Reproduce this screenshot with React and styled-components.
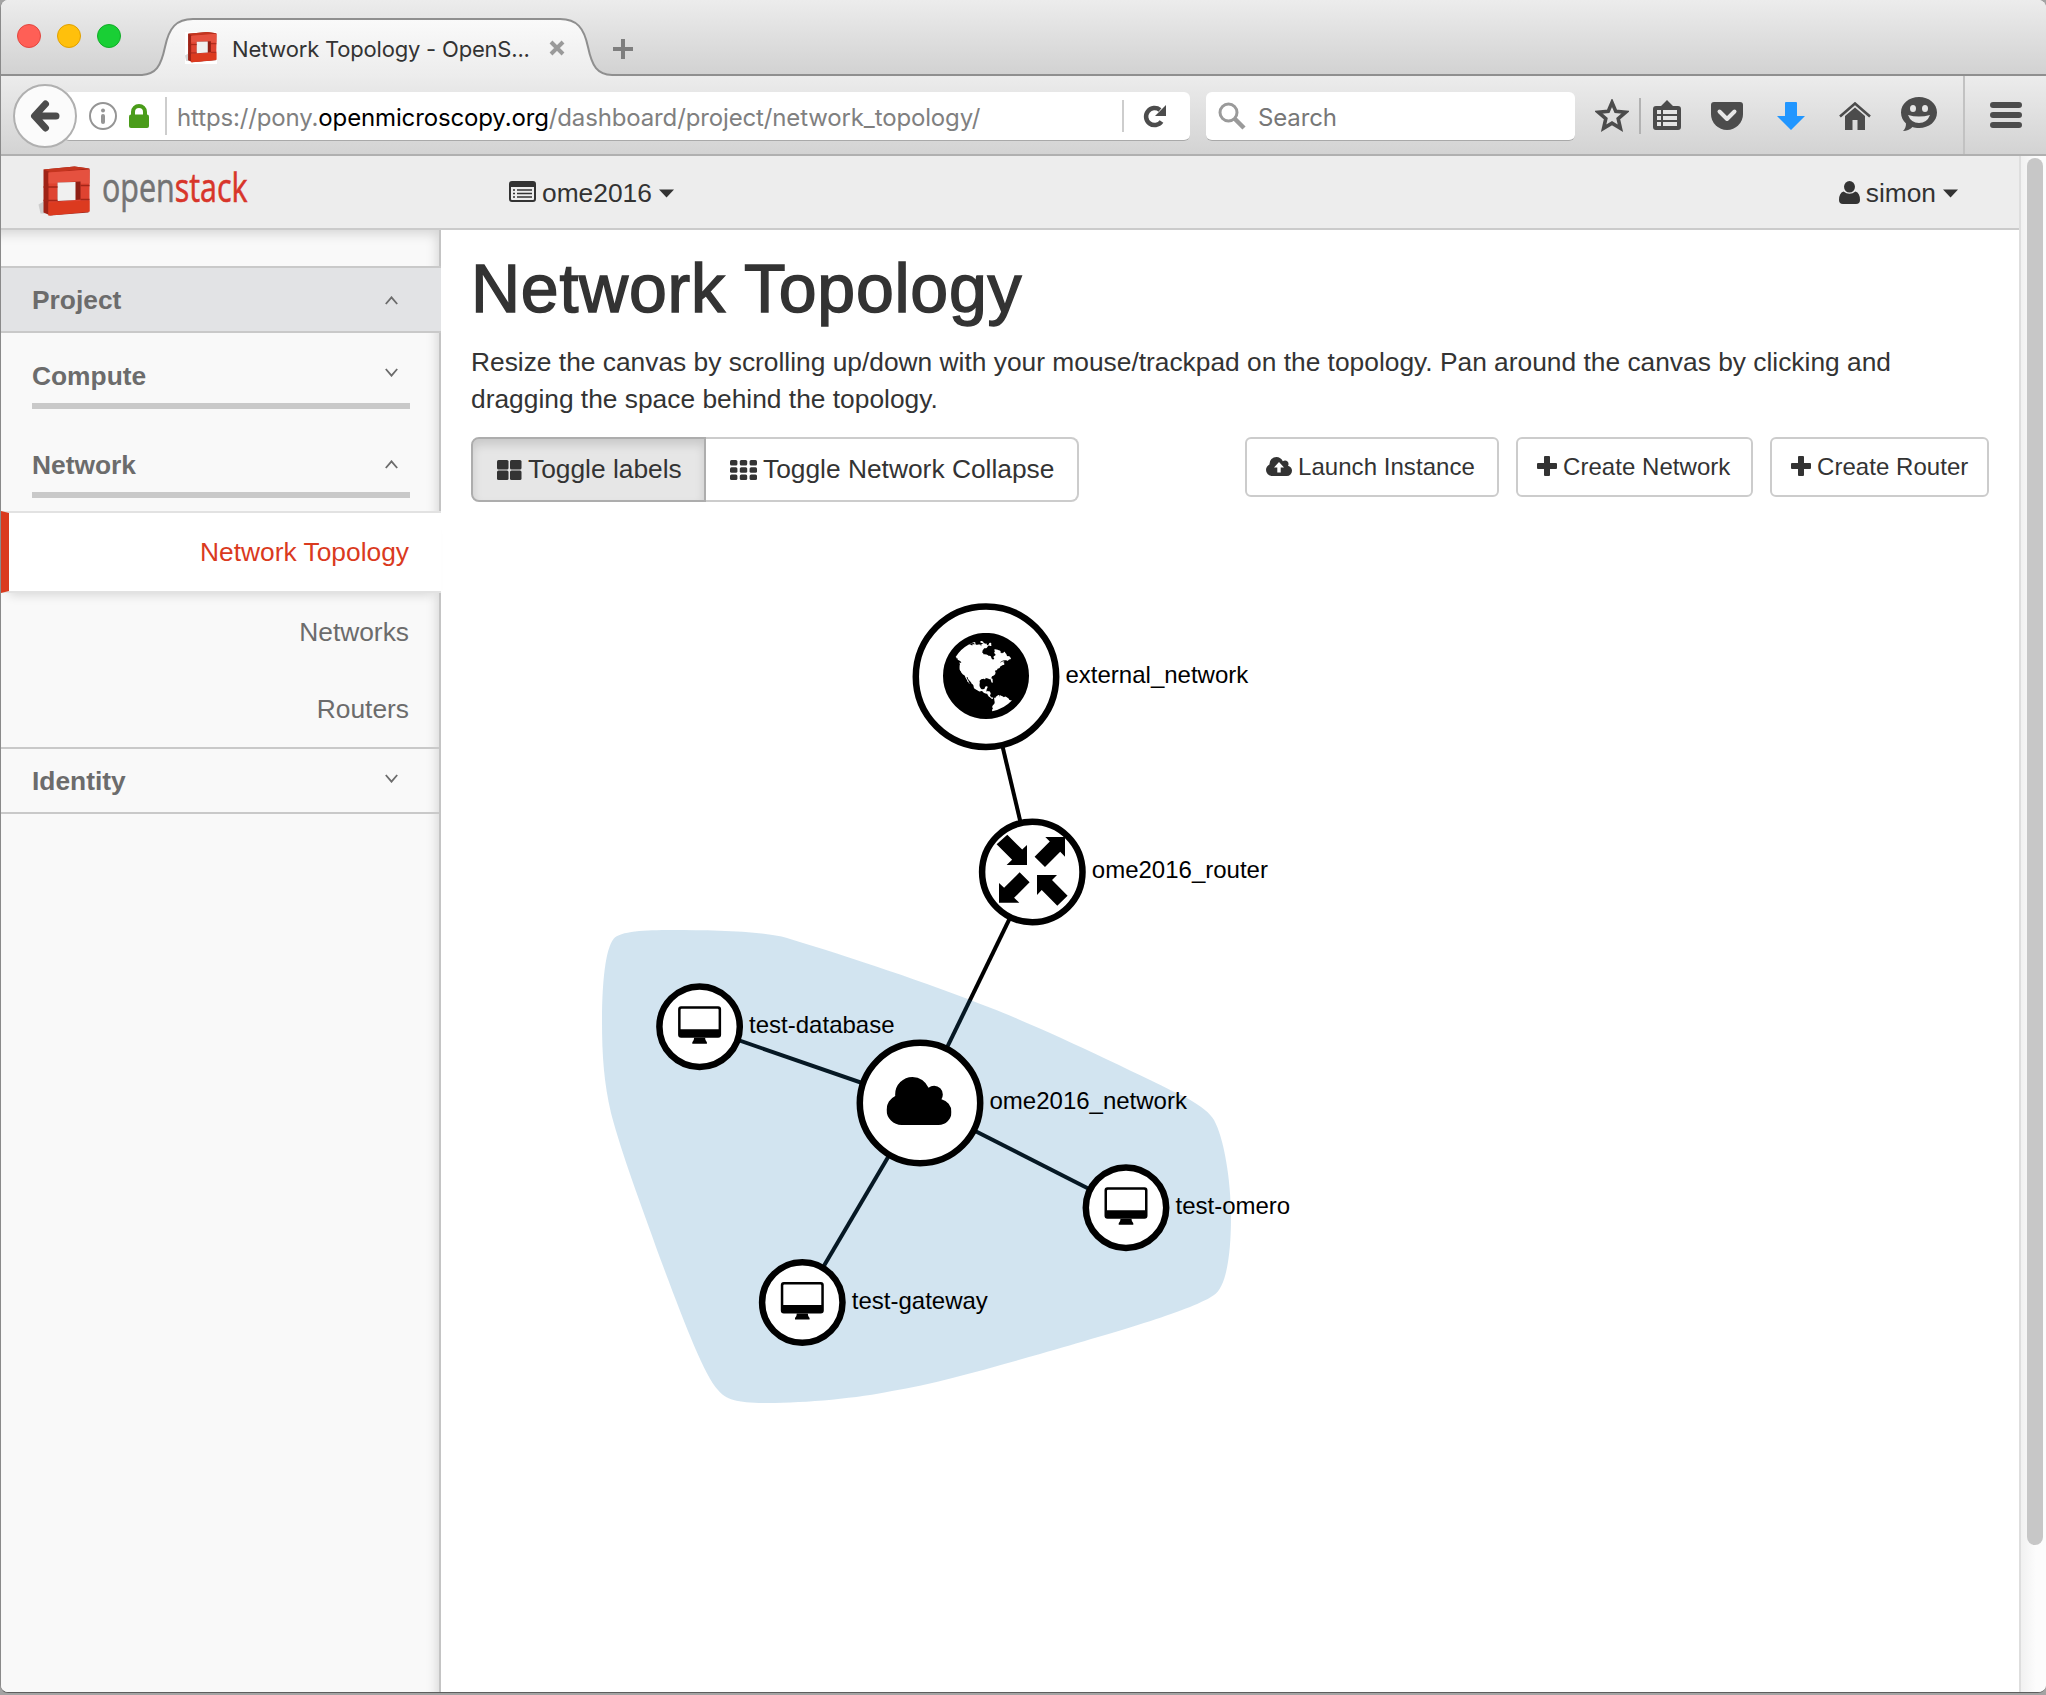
import React from "react";
import styled, { createGlobalStyle } from "styled-components";

const GlobalStyle = createGlobalStyle`
  * { box-sizing: border-box; }
  html, body { margin: 0; padding: 0; background: #a3a3a3; }
  body { width: 2046px; height: 1695px; overflow: hidden; }
  svg { display: block; flex: none; }
`;

const ui = `"Inter", "Roboto", sans-serif`;
const page = `"Liberation Sans", Arial, sans-serif`;

const Window = styled.div`
  width: 2046px;
  height: 1693px;
  display: flex;
  flex-direction: column;
  overflow: hidden;
  background: #fff;
  border-left: 1px solid #8a8a8a;
  border-bottom: 1px solid #5e5e5e;
  border-radius: 8px;
`;

/* ---------- browser chrome ---------- */

const TitleBar = styled.div`
  flex: none;
  height: 76px;
  display: flex;
  background: linear-gradient(#ececec, #d2d2d2);
  border-bottom: 2px solid #8f8f8f;
`;

const Lights = styled.div`
  display: flex;
  gap: 16px;
  padding: 24px 0 0 16px;
  width: 141px;
`;

const Light = styled.span`
  width: 24px;
  height: 24px;
  border-radius: 50%;
  background: ${(p) => p.$fill};
  border: 1px solid ${(p) => p.$edge};
`;

const Tab = styled.div`
  position: relative;
  width: 470px;
  height: 76px;
  display: flex;
  align-items: center;
  padding: 20px 0 0 43px;
  font: 400 22px/32px ${ui};
  color: #333;
`;

const TabShape = styled.svg`
  position: absolute;
  left: 0;
  top: 0;
`;

const TabText = styled.span`
  position: relative;
  margin-left: 15px;
  padding-top: 2px;
  width: 304px;
  letter-spacing: -0.2px;
  white-space: nowrap;
`;

const TabIcon = styled.svg`
  position: relative;
  margin-left: ${(p) => p.$left || 0}px;
`;

const NewTab = styled.div`
  padding: 39px 0 0 1px;
`;

const Toolbar = styled.div`
  flex: none;
  height: 80px;
  display: flex;
  padding-left: 12px;
  background: linear-gradient(#ececec, #d3d3d3);
  border-bottom: 2px solid #b0b0b0;
`;

const BackButton = styled.div`
  position: relative;
  flex: none;
  width: 64px;
  height: 64px;
  margin-top: 8px;
  border-radius: 50%;
  border: 2px solid #b0b0b0;
  background: #fbfbfb;
  display: flex;
  align-items: center;
  justify-content: center;
`;

const Field = styled.div`
  flex: none;
  height: 49px;
  margin-top: 16px;
  display: flex;
  align-items: center;
  background: #fff;
  border-bottom: 1px solid #a9a9a9;
  border-radius: 6px;
  font: 400 24px/46px ${ui};
  color: #808080;
  white-space: nowrap;
`;

const UrlField = styled(Field)`
  width: 1127px;
  margin-left: -14px;
  padding-left: 26px;
`;

const SearchField = styled(Field)`
  width: 369px;
  margin-left: 16px;
  padding-left: 12px;
  color: #777;
`;

const FieldText = styled.span`
  width: ${(p) => p.$w}px;
  padding: 3px 0 0 ${(p) => p.$left}px;
  letter-spacing: -0.14px;
  b {
    font-weight: 400;
    color: #000;
  }
`;

const Lock = styled.svg`
  margin: 0 16px 0 12px;
`;

const Reload = styled.svg`
  margin-left: 19px;
`;

const Rule = styled.div`
  flex: none;
  width: 2px;
  height: ${(p) => p.$h}px;
  background: ${(p) => p.$c || "#cdcdcd"};
`;

const Tools = styled.div`
  flex: 1;
  display: flex;
  padding-left: 20px;
`;

const Tool = styled.div`
  flex: none;
  width: ${(p) => p.$w}px;
  padding-top: ${(p) => p.$t}px;
  padding-left: ${(p) => p.$left || 0}px;
`;

/* ---------- page ---------- */

const Viewport = styled.div`
  flex: 1;
  display: flex;
  min-height: 0;
  font: 400 26.35px/37px ${page};
  color: #333;
`;

const Site = styled.div`
  width: 2018px;
  display: flex;
  flex-direction: column;
`;

const ScrollTrack = styled.div`
  flex: 1;
  border-left: 2px solid #dedede;
  padding: 2px 0 0 6px;
  background: linear-gradient(90deg, #f1f1f1, #fcfcfc 60%);
`;

const ScrollThumb = styled.div`
  width: 16px;
  height: 1387px;
  border-radius: 8px;
  background: #c7c7c7;
`;

const Header = styled.header`
  flex: none;
  height: 74px;
  display: flex;
  padding: 0 61px 0 37px;
  background: #ededed;
  border-bottom: 2px solid #cbcbcb;
`;

const Menu = styled.div`
  display: flex;
  padding-top: 18px;
  margin-left: ${(p) => p.$left};
`;

const MenuIcon = styled.svg`
  margin-top: ${(p) => p.$t}px;
`;

const MenuLabel = styled.span`
  padding: 1px 7px 0 6px;
`;

const Columns = styled.div`
  flex: 1;
  min-height: 0;
  display: flex;
`;

const Sidebar = styled.nav`
  flex: none;
  width: 440px;
  padding-top: 36px;
  background: #f9f9f9;
  border-right: 2px solid #c4c4c4;
  box-shadow: inset -6px 8px 12px -4px rgba(0, 0, 0, 0.14);
  color: #6c6c6c;
`;

const Panel = styled.div`
  height: 67px;
  margin-right: ${(p) => (p.$active ? "-2px" : 0)};
  padding: 14px ${(p) => (p.$active ? 43 : 41)}px 0 31px;
  display: flex;
  justify-content: space-between;
  font-weight: 700;
  border-top: 2px solid #c9c9c9;
  border-bottom: 2px solid #c9c9c9;
  background: ${(p) => (p.$active ? "#e2e3e5" : "transparent")};
`;

const Group = styled.div`
  margin: ${(p) => p.$top}px 29px 0 31px;
  height: 51px;
  padding-right: 12px;
  display: flex;
  justify-content: space-between;
  font-weight: 700;
  border-bottom: 6px solid #c9c9c9;
`;

const Chevron = styled.svg`
  margin-top: ${(p) => p.$t}px;
`;

const Item = styled.div`
  height: 77px;
  padding: 21px 30px 0 0;
  text-align: right;
`;

const ActiveItem = styled.div`
  height: 82px;
  margin: 13px -2px 0 0;
  padding: 21px 32px 0 0;
  text-align: right;
  color: #da3a1e;
  background: #fff;
  border-top: 2px solid #e2e2e2;
  border-bottom: 2px solid #e2e2e2;
  border-left: 8px solid #da3a1e;
  box-shadow: 0 10px 10px -8px rgba(0, 0, 0, 0.14);
`;

const Main = styled.main`
  flex: 1;
  padding: 22px 30px 0 30px;
`;

const Title = styled.h1`
  margin: 0;
  font: 400 68px/73px ${page};
  -webkit-text-stroke: 1.5px #333;
  letter-spacing: 0.75px;
`;

const Lead = styled.p`
  margin: 19px 0;
  width: 1460px;
`;

const Bar = styled.div`
  display: flex;
  height: 65px;
  align-items: flex-start;
`;

const Toggle = styled.div`
  height: 65px;
  width: ${(p) => p.$w}px;
  display: flex;
  align-items: center;
  gap: 6px;
  padding: 0 0 0 24px;
  border: 2px solid #ccc;
  border-left-width: ${(p) => (p.$on ? 2 : 0)}px;
  border-radius: ${(p) => (p.$on ? "8px 0 0 8px" : "0 8px 8px 0")};
  white-space: nowrap;
  ${(p) =>
    p.$on &&
    `background: #e6e6e6; border-color: #adadad; box-shadow: inset 0 6px 10px rgba(0,0,0,0.125);`}
`;

const Actions = styled.div`
  margin-left: auto;
  display: flex;
  gap: 17px;
`;

const Action = styled.div`
  height: 60px;
  width: ${(p) => p.$w}px;
  display: flex;
  align-items: center;
  gap: 6px;
  padding: 0 0 2px 19px;
  border: 2px solid #ccc;
  border-radius: 6px;
  font-size: 24px;
  letter-spacing: 0.05px;
  white-space: nowrap;
`;

const Canvas = styled.svg`
  font: 24px ${page};
`;

/* ---------- icons ---------- */

const Cube = () => (
  <>
    <path d="M0 38 L7 34 V47 H2Z" fill="#b9b9b9" opacity=".6" />
    <path d="M5 3 L36 0 L51 2 L50 46 L12 49 L5 46Z" fill="#9f2317" />
    <path d="M5 3 L36 0 L51 2 L13 6Z" fill="#c4351f" />
    <path d="M10 6 L51 3 V45 L10 49Z" fill="#df4331" />
    <path d="M10 6 L51 3 V17 H10Z" fill="#e5513f" />
    <path d="M10 36 L51 34 V45 L10 49Z" fill="#dc3a1f" />
    <path d="M19 16 L42 15 V33 L19 35Z" fill="#8e1e14" />
    <path d="M19 16 L37 15.500 V33.500 L19 34.500Z" fill="#f0f0f0" />
    <path d="M5 20.500 H19 M42 19 H51 M5 34 H19 M42 33 H51" stroke="#a32618" strokeWidth="1.500" />
  </>
);

const Logo = () => (
  <svg width="252" height="72" viewBox="38 156 252 72" fontFamily="Open Sans, sans-serif" fontSize="40">
    <g transform="translate(38.500 166.500)"><Cube /></g>
    <text x="102" y="202" textLength="145.500" lengthAdjust="spacingAndGlyphs" strokeWidth=".6">
      <tspan fill="#737373" stroke="#737373">open</tspan>
      <tspan fill="#d8352a" stroke="#d8352a">stack</tspan>
    </text>
  </svg>
);

const Caret = () => (
  <MenuIcon $t={15} width="15" height="9" viewBox="0 0 15 9"><path d="M0 .5H15L7.500 8.500Z" fill="#333" /></MenuIcon>
);

const Arrow = ({ up, t }) => (
  <Chevron $t={t} width="13" height="9" viewBox="0 0 13 9">
    <path d={up ? "M.8 8 L6.500 1.300 L12.200 8" : "M.8 1 L6.500 7.700 L12.200 1"} fill="none" stroke="#6c6c6c" strokeWidth="1.800" />
  </Chevron>
);

const Plus = () => (
  <svg width="20" height="20" viewBox="0 0 20 20"><path d="M8 0h4q1 0 1 1v6h6q1 0 1 1v4q0 1-1 1h-6v6q0 1-1 1H8q-1 0-1-1v-6H1q-1 0-1-1V8q0-1 1-1h6V1q0-1 1-1z" fill="#333" /></svg>
);

const cloudPath = "M1984 1152q0 159-112.500 271.500t-271.500 112.500h-1088q-185 0-316.500-131.500t-131.500-316.500q0-132 71-241.500t187-163.500q-2-28-2-43 0-212 150-362t362-150q158 0 286.500 88t187.500 230q70-62 166-62 106 0 181 75t75 181q0 75-41 138 129 30 213 134.500t84 239.500z";

const globePath =
  "M896 128q209 0 385.500 103t279.500 279.500 103 385.500-103 385.500-279.500 279.500-385.500 103-385.500-103-279.500-279.500-103-385.500 103-385.500 279.500-279.500 385.500-103zm274 521q-2 1-9.500 9.500t-13.500 9.500q2 0 4.500-5t5-11 3.500-7q6-7 22-15 14-6 52-12 34-8 51 11-2-2 9.500-13t14.500-12q3-2 15-4.500t15-7.500l2-22q-12 1-17.500-7t-6.500-21q0 2-6 8 0-7-4.500-8t-11.500 1-9 1q-10-3-15-7.500t-8-16.500-4-15q-2-5-9.500-11t-9.500-10q-1-2-2.500-5.500t-3-6.500-4-5.500-5.500-2.500-7 5-7.500 10-4.500 5q-3-2-6-1.500t-4.500 1-4.500 3-5 3.500q-3 2-8.500 3t-8.500 2q15-5-1-11-10-4-16-3 9-4 7.500-12t-8.500-14h5q-1-4-8.500-8.500t-17.500-8.500-13-6q-8-5-34-9.500t-33-.5q-5 6-4.500 10.500t4 14 3.500 12.500q1 6-5.500 13t-6.500 12q0 7 14 15.500t10 21.500q-3 8-16 16t-16 12q-5 8-1.500 18.500t10.500 16.500q2 2 1.500 4t-3.500 4.500-5.500 4-6.500 3.500l-3 2q-11 5-20.500-6t-13.500-26q-7-25-16-30-23-8-29 1-5-13-41-26-25-9-58-4 6-1 0-15-7-15-19-12 3-6 4-17.500t1-13.500q3-13 12-23 1-1 7-8.500t9.500-13.500 .5-6q35 4 50-11 5-5 11.500-17t10.500-17q9-6 14-5.500t14.500 5.500 14.500 5.500q14 1 15.500-11t-7.500-20q12 1 3-17-4-7-8-9-12-4-27 5-8 4 2 8-1-1-9.500 10.500t-16.500 17.500-16-5q-1-1-5.500-13.500t-9.500-13.500q-8 0-16 15 3-8-11-15t-24-8q19-12-8-27-7-4-20.500-5t-19.500 4q-5 7-5.500 11.500t5 8 10.500 5.500 11.500 4 8.500 3q14 10 8 14-2 1-8.500 3.500t-11.500 4.500-6 4q-3 4 0 14t-2 14q-5-5-9-17.500t-7-16.500q7 9-25 6l-10-1q-4 0-16 2t-20.500 1-13.500-8q-4-8 0-20 1-4 4-2-4-3-11-9.500t-10-8.500q-46 15-94 41 6 1 12-1 5-2 13-6.500t10-5.500q34-14 42-7l5-5q14 16 20 25-7-4-30-1-20 6-22 12 7 12 5 18-4-3-11.500-10t-14.500-11-15-5q-16 0-22 1-146 80-235 222 7 7 12 8 4 1 5 9t2.500 11 11.500-3q9 8 3 19 1-1 44 27 19 17 21 21 3 11-10 18-1-2-9-9t-9-4q-3 5 .5 18.500t10.500 12.500q-7 0-9.500 16t-2.500 35.500-1 23.500l2 1q-3 12 5.500 34.500t21.500 19.500q-13 3 20 43 6 8 8 9 3 2 12 7.500t15 10 10 10.500q4 5 10 22.500t14 23.500q-2 6 9.500 20t10.500 23q-1 0-2.500 1t-2.500 1q3 7 15.500 14t15.500 13q1 3 2 10t3 11 8 2q2-20-24-62-15-25-17-29-3-5-5.500-15.500t-4.500-14.500q2 0 6 1.500t8.500 3.500 7.500 4 2 3q-3 7 2 17.500t12 18.500 17 19 12 13q6 6 14 19.500t0 13.500q9 0 20 10t17 20q5 8 8 26t5 24q2 7 8.500 13.500t12.500 9.500l16 8 13 7q5 2 18.500 10.500t21.500 11.500q10 4 16 4t14.500-2.500 13.500-3.500q15-2 29 15t21 21q36 19 55 11-2 1 .5 7.500t8 15.500 9 14.500 5.500 8.500q5 6 18 15t18 15q6-4 7-9-3 8 7 20t18 10q14-3 14-32-31 15-49-18 0-1-2.500-5.500t-4-8.500-2.500-8.500 0-7.500 5-3q9 0 10-3.500t-2-12.500-4-13q-1-8-11-20t-12-15q-5 9-16 8t-16-9q0 1-1.500 5.500t-1.500 6.500q-13 0-15-1 1-3 2.500-17.500t3.500-22.500q1-4 5.500-12t7.500-14.500 4-12.500-4.500-9.500-17.500-2.500q-19 1-26 20-1 3-3 10.500t-5 11.500-9 7q-7 3-24 2t-24-5q-13-8-22.500-29t-9.500-37q0-10 2.500-26.500t3-25-5.500-24.500q3-2 9-9.500t10-10.500q2-1 4.500-1.500t4.500 0 4-1.500 3-6q-1-1-4-3-3-3-4-3 7 3 28.500-1.500t27.500 1.500q15 11 22-2 0-1-2.500-9.500t-.5-13.500q5 27 29 9 3 3 15.500 5t17.500 5q3 2 7 5.500t5.500 4.500 5-.5 8.500-6.500q10 14 12 24 11 40 19 44 7 3 11 2t4.500-9.500 0-14-1.500-12.500l-1-8v-18l-1-8q-15-3-18.500-12t1.500-18.500 15-18.500q1-1 8-3.500t15.500-6.500 12.500-8q21-19 15-35 7 0 11-9-1 0-5-3t-7.500-5-4.500-2q9-5 2-16 5-3 7.500-11t7.500-10q9 12 21 2 7-8 1-16 5-7 20.500-10.500t18.500-9.500q7 2 8-2t1-12 3-12q4-5 15-9t13-5l17-11q3-4 0-4 18 2 31-11 10-11-6-20 3-6-3-9.500t-15-5.500q3-1 11.500-.5t10.500-1.500q15-10-7-16-17-5-43 12zm-163 877q206-36 351-189-3-3-12.500-4.500t-12.500-3.500q-18-7-24-8 1-7-2.500-13t-8-9-12.500-8-11-7q-2-2-7-6t-7-5.500-7.500-4.500-8.500-2-10 1l-3 1q-3 1-5.500 2.500t-5.500 3-4 3 0 2.500q-21-17-36-22-5-1-11-5.500t-10.500-7-10-1.500-11.500 7q-5 5-6 15t-2 13q-7-5 0-17.500t2-18.500q-3-6-10.500-4.500t-12 4.500-11.500 8.500-9 6.500-8.500 5.500-8.500 7.500q-3 4-6 12t-5 11q-2-4-11.500-6.500t-9.500-5.500q2 10 4 35t5 38q7 31-12 48-27 25-29 40-4 22 12 26 0 7-8 20.500t-7 21.500q0 6 2 16z";

const Monitor = () => (
  <>
    <path fillRule="evenodd" d="M-18.500-20.500H18.500Q21.500-20.500 21.500-17.500V8Q21.500 11 18.500 11H-18.500Q-21.500 11-21.500 8V-17.500Q-21.500-20.500-18.500-20.500ZM-18-18Q-19-18-19-17V2.500H19V-17Q19-18 18-18Z" />
    <path d="M-5.500 11H5.500Q5.500 14 7.300 15.500V17H-7.300V15.500Q-5.500 14-5.500 11Z" />
  </>
);

const RouterArrows = () => (
  <path d="M-25-37.300L-10.100-22.400L-5.300-27V-7H-25.700L-20.200-12.200L-35.700-27.700ZM32.700-35V-15.300L27.900-20.200L12.700-5L2.300-15.300L17.500-30.500L13-35ZM-33.300 30.700V11L-28.200 15.800L-12.700.3L-2.700 10.300L-18.200 25.800L-13 30.700ZM4.700 3H24.700L19.700 8.100L35.300 23.700L25 33.700L9.400 18.100L4.700 23Z" />
);

const NetworkCloud = () => (
  <svg x={-33.5} y={-26} width={65} height={48} viewBox="64 128 1920 1408" preserveAspectRatio="none"><path d={cloudPath} /></svg>
);

const Globe = () => (
  <svg x={-43} y={-43.8} width={86} height={86} viewBox="128 128 1536 1536"><path d={globePath} /></svg>
);

const nodes = [
  { name: "external_network", x: 986, y: 676.7, r: 70, Glyph: Globe },
  { name: "ome2016_router", x: 1032.3, y: 872, r: 50, Glyph: RouterArrows },
  { name: "ome2016_network", x: 920, y: 1103, r: 60, Glyph: NetworkCloud },
  { name: "test-database", x: 699.6, y: 1026.7, r: 40, Glyph: Monitor },
  { name: "test-omero", x: 1126, y: 1207.7, r: 40, Glyph: Monitor },
  { name: "test-gateway", x: 802.3, y: 1302.5, r: 40, Glyph: Monitor },
];
const links = [[0, 1], [1, 2], [2, 3], [2, 4], [2, 5]];

const Topology = () => (
  <Canvas width="1518" height="1000" viewBox="471 502 1518 1000">
    {links.map(([a, b]) => (
      <line key={`${a}${b}`} x1={nodes[a].x} y1={nodes[a].y} x2={nodes[b].x} y2={nodes[b].y} stroke="#000" strokeWidth="4" />
    ))}
    <path
      fill="#1f77b4"
      fillOpacity=".2"
      d="M613.500 939C620 931 645 930 672 930C712 930 762 931 787 938C850 957 925 982 991 1008C1050 1031 1140 1075 1187 1098C1202 1107 1210 1113 1214 1120C1224 1138 1231 1180 1231 1217C1231 1260 1225 1288 1214 1295C1195 1309 1120 1331 1040 1354C990 1368 935 1384 892 1391C860 1398 805 1403 768 1403C738 1403 726 1400 718 1390C704 1375 684 1322 660 1258C642 1207 622 1155 611 1113C604 1083 602 1055 602 1022C602 985 605 950 613.500 939Z"
    />
    {nodes.map(({ name, x, y, r, Glyph }) => (
      <g key={name} transform={`translate(${x} ${y})`}>
        <circle r={r + 0.2} fill="#fff" stroke="#000" strokeWidth="6.500" />
        <Glyph />
        <text x={r + 9.5} y="6">{name}</text>
      </g>
    ))}
  </Canvas>
);

const Tiles = ({ n, w, h, dx, dy }) =>
  Array.from({ length: n * n }, (_, i) => (
    <rect key={i} x={(i % n) * dx} y={Math.floor(i / n) * dy} width={w} height={h} rx="1.500" />
  ));

export default function App() {
  return (
    <>
      <GlobalStyle />
      <Window>
        <TitleBar>
          <Lights>
            <Light $fill="#ff5f56" $edge="#e2463f" />
            <Light $fill="#ffc00c" $edge="#e0a000" />
            <Light $fill="#19cf35" $edge="#12ac28" />
          </Lights>
          <Tab>
            <TabShape width="470" height="78" viewBox="142 0 470 78">
              <defs>
                <linearGradient id="tab" x1="0" y1="0" x2="0" y2="1"><stop offset="0" stopColor="#fafafa" /><stop offset="1" stopColor="#ececec" /></linearGradient>
              </defs>
              <path d="M140 75C156 75 161 66 165 47C169 28 176 19 193 19H560C577 19 584 28 588 47C592 66 597 75 613 75V78H140Z" fill="url(#tab)" />
              <path d="M140 75C156 75 161 66 165 47C169 28 176 19 193 19H560C577 19 584 28 588 47C592 66 597 75 613 75" fill="none" stroke="#8f8f8f" strokeWidth="2" />
            </TabShape>
            <TabIcon width="32" height="32" viewBox="0 0 52 52"><rect width="52" height="52" fill="#fff" /><Cube /></TabIcon>
            <TabText>Network Topology - OpenS...</TabText>
            <TabIcon $left={12} width="18" height="18" viewBox="0 0 18 18"><path d="M3 3L15 15M15 3L3 15" stroke="#9a9a9a" strokeWidth="4" /></TabIcon>
          </Tab>
          <NewTab>
            <svg width="20" height="20" viewBox="0 0 20 20"><path d="M10 0V20M0 10H20" stroke="#7e7e7e" strokeWidth="4" /></svg>
          </NewTab>
        </TitleBar>
        <Toolbar>
          <BackButton>
            <svg width="30" height="32" viewBox="0 0 30 32"><path d="M15.500 4L4.500 16L15.500 28M6 16H26" fill="none" stroke="#4c4c4c" strokeWidth="7" strokeLinecap="round" strokeLinejoin="round" /></svg>
          </BackButton>
          <UrlField>
            <svg width="28" height="28" viewBox="0 0 28 28"><circle cx="14" cy="14" r="13" fill="none" stroke="#959595" strokeWidth="2" /><circle cx="14" cy="8.500" r="2" fill="#959595" /><rect x="12" y="12" width="4" height="10" rx="2" fill="#959595" /></svg>
            <Lock width="20" height="24" viewBox="0 0 20 24"><path d="M4 12V8a6 6 0 0 1 12 0v4" fill="none" stroke="#4a9c1a" strokeWidth="4" /><rect y="10.500" width="20" height="13.500" rx="2" fill="#4a9c1a" /></Lock>
            <Rule $h={38} />
            <FieldText $w={955} $left={10}>https://pony.<b>openmicroscopy.org</b>/dashboard/project/network_topology/</FieldText>
            <Rule $h={32} />
            <Reload width="24" height="24" viewBox="0 0 24 24"><path d="M18.500 17.500A8.500 8.500 0 1 1 17 6" fill="none" stroke="#4c4c4c" strokeWidth="4.500" /><path d="M23 1V12H12Z" fill="#4c4c4c" /></Reload>
          </UrlField>
          <SearchField>
            <svg width="28" height="28" viewBox="0 0 28 28"><circle cx="10.500" cy="10.500" r="8.500" fill="none" stroke="#9a9a9a" strokeWidth="3" /><path d="M16.500 16.500L26 26" stroke="#9a9a9a" strokeWidth="4.500" /></svg>
            <FieldText $w={300} $left={12}>Search</FieldText>
          </SearchField>
          <Tools>
            <Tool $w={44} $t={23}><svg width="34" height="34" viewBox="0 0 34 34"><path d="M17 3.500L20.800 12.400L30.500 13.300L23.200 19.700L25.400 29.300L17 24.200L8.600 29.300L10.800 19.700L3.500 13.300L13.200 12.400Z" fill="none" stroke="#4c4c4c" strokeWidth="3.600" /></svg></Tool>
            <Tool $w={14} $t={22}><Rule $h={36} $c="#b2b2b2" /></Tool>
            <Tool $w={58} $t={24}><svg width="28" height="30" viewBox="0 0 28 30"><path d="M8 6L14 0L20 6H25Q28 6 28 9V27Q28 30 25 30H3Q0 30 0 27V9Q0 6 3 6Z" fill="#4c4c4c" /><path d="M4 12H8M10 12H24M4 18H8M10 18H24M4 24H8M10 24H24" stroke="#e4e4e4" strokeWidth="4" /></svg></Tool>
            <Tool $w={66} $t={26}><svg width="32" height="28" viewBox="0 0 32 28"><path d="M3 0H29Q32 0 32 3V12A16 16 0 0 1 0 12V3Q0 0 3 0Z" fill="#4c4c4c" /><path d="M8.500 9.500L16 17L23.500 9.500" fill="none" stroke="#e6e6e6" strokeWidth="4" strokeLinecap="round" strokeLinejoin="round" /></svg></Tool>
            <Tool $w={62} $t={26}><svg width="28" height="28" viewBox="0 0 28 28"><path d="M9 0H19Q20 0 20 1V14H28L14 28L0 14H8V1Q8 0 9 0Z" fill="#2196ff" /></svg></Tool>
            <Tool $w={62} $t={26}><svg width="32" height="28" viewBox="0 0 32 28"><path d="M1 14.500L16 1.500L31 14.500" fill="none" stroke="#4c4c4c" strokeWidth="2.600" /><path d="M6 14L16 5.500L26 14V28H18.500V18H13.500V28H6Z" fill="#4c4c4c" /></svg></Tool>
            <Tool $w={62} $t={21}><svg width="36" height="34" viewBox="0 0 36 34"><path d="M18 0C28 0 36 6.500 36 15.500S28 31 18 31C15.500 31 13.500 30.700 11.500 30C9 32.500 5.500 34 2 34C4 32 5 29.500 5 26.500C2 24 0 20 0 15.500C0 6.500 8 0 18 0Z" fill="#4c4c4c" /><ellipse cx="12" cy="11.500" rx="3" ry="3.500" fill="#e4e4e4" /><ellipse cx="24" cy="11.500" rx="3" ry="3.500" fill="#e4e4e4" /><path d="M7 18Q18 21 29 18Q26 26 18 26T7 18Z" fill="#e4e4e4" /></svg></Tool>
            <Rule $h={78} $c="#c2c2c2" />
            <Tool $w={56} $t={26} $left={25}><svg width="32" height="27" viewBox="0 0 32 27"><path d="M3 3H29M3 13H29M3 23H29" stroke="#4c4c4c" strokeWidth="6" strokeLinecap="round" /></svg></Tool>
          </Tools>
        </Toolbar>
        <Viewport>
          <Site>
            <Header>
              <Logo />
              <Menu $left="219px">
                <MenuIcon $t={7} width="27" height="22" viewBox="0 0 27 22"><path fillRule="evenodd" fill="#333" d="M3 0H24Q27 0 27 3V18Q27 21 24 21H3Q0 21 0 18V3Q0 0 3 0ZM2 6V18Q2 19 3 19H24Q25 19 25 18V6Z" /><path d="M4 9H6M8 9H23M4 12.500H6M8 12.500H23M4 16H6M8 16H23" stroke="#333" strokeWidth="1.700" /></MenuIcon>
                <MenuLabel>ome2016</MenuLabel>
                <Caret />
              </Menu>
              <Menu $left="auto">
                <MenuIcon $t={7} width="21" height="23" viewBox="0 0 21 23"><ellipse cx="10.500" cy="5.800" rx="5.500" ry="5.800" fill="#333" /><path d="M4.500 10.500Q10.500 15 16.500 10.500Q21 12 21 19Q21 23 17 23H4Q0 23 0 19Q0 12 4.500 10.500Z" fill="#333" /></MenuIcon>
                <MenuLabel>simon</MenuLabel>
                <Caret />
              </Menu>
            </Header>
            <Columns>
              <Sidebar>
                <Panel $active>Project<Arrow up t={14} /></Panel>
                <Group $top={25}>Compute<Arrow t={10} /></Group>
                <Group $top={38}>Network<Arrow up t={13} /></Group>
                <ActiveItem>Network Topology</ActiveItem>
                <Item>Networks</Item>
                <Item>Routers</Item>
                <Panel>Identity<Arrow t={11} /></Panel>
              </Sidebar>
              <Main>
                <Title>Network Topology</Title>
                <Lead>Resize the canvas by scrolling up/down with your mouse/trackpad on the topology. Pan around the canvas by clicking and dragging the space behind the topology.</Lead>
                <Bar>
                  <Toggle $on $w={235}>
                    <svg width="25" height="20" viewBox="0 0 25 20" fill="#333"><Tiles n={2} w={11.5} h={9.5} dx={13} dy={10.5} /></svg>
                    Toggle labels
                  </Toggle>
                  <Toggle $w={373}>
                    <svg width="27" height="20" viewBox="0 0 27 20" fill="#333"><Tiles n={3} w={7.4} h={5.6} dx={9.8} dy={7.2} /></svg>
                    Toggle Network Collapse
                  </Toggle>
                  <Actions>
                    <Action $w={254}>
                      <svg width="26" height="19" viewBox="0 0 26 19"><svg width="26" height="19" viewBox="64 128 1920 1408" preserveAspectRatio="none"><path d={cloudPath} fill="#333" /></svg><path d="M13 5L18 10.500H14.700V15.500H11.300V10.500H8Z" fill="#fff" /></svg>
                      Launch Instance
                    </Action>
                    <Action $w={237}><Plus />Create Network</Action>
                    <Action $w={219}><Plus />Create Router</Action>
                  </Actions>
                </Bar>
                <Topology />
              </Main>
            </Columns>
          </Site>
          <ScrollTrack><ScrollThumb /></ScrollTrack>
        </Viewport>
      </Window>
    </>
  );
}
